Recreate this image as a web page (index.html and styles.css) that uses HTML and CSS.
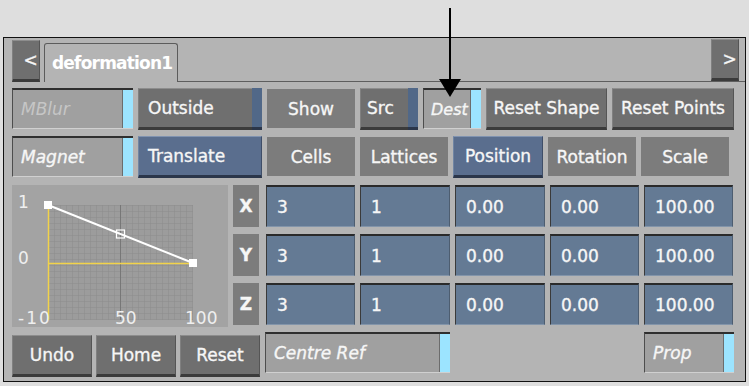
FILE: index.html
```html
<!DOCTYPE html>
<html lang="en">
<head>
  <meta charset="UTF-8" />
  <title>deformation1</title>
  <link rel="stylesheet" href="styles.css">
</head>
<body>
  <!-- callout arrow pointing at Dest -->
  <svg class="arrow" width="24" height="98" viewBox="0 0 24 98">
    <line x1="12" y1="8" x2="12" y2="82" stroke="#000" stroke-width="2"/>
    <polygon points="1,79 23,79 12,97" fill="#000"/>
  </svg>

  <div class="panel">
    <div class="tabbar">
      <div class="btn raised nav">&lt;</div>
      <div class="tab">deformation1</div>
      <div class="tab-fill"><div class="btn raised nav">&gt;</div></div>
    </div>

    <div class="row r1">
      <div class="btn toggle dim w-mode">MBlur</div>
      <div class="btn raised strip w-mode2">Outside</div>
      <div class="btn flat w-col">Show</div>
      <div class="btn raised strip w-src">Src</div>
      <div class="btn toggle w-dest">Dest</div>
      <div class="btn raised center w-reset">Reset Shape</div>
      <div class="btn raised center w-reset2">Reset Points</div>
    </div>

    <div class="row r2">
      <div class="btn toggle w-mode">Magnet</div>
      <div class="btn blue w-mode2">Translate</div>
      <div class="btn flat w-col">Cells</div>
      <div class="btn flat w-col">Lattices</div>
      <div class="btn blue center w-col2">Position</div>
      <div class="btn flat w-col">Rotation</div>
      <div class="btn flat w-col">Scale</div>
    </div>

    <div class="mid">
      <div class="graph">
        <svg width="216" height="142" viewBox="0 0 216 142">
          <defs>
            <pattern id="cells" width="6" height="6" patternUnits="userSpaceOnUse" x="36" y="20">
              <path d="M6 0 L0 0 0 6" fill="none" stroke="#8b8b8b" stroke-width="1"/>
            </pattern>
          </defs>
          <rect x="36" y="20" width="145" height="115" fill="#9c9c9c"/>
          <rect x="36" y="20" width="145" height="115" fill="url(#cells)"/>
          <line x1="108.5" y1="20" x2="108.5" y2="135" stroke="#777"/>
          <line x1="36.5" y1="20" x2="36.5" y2="135" stroke="#f2d34a" stroke-width="1.5"/>
          <line x1="36" y1="78.5" x2="181" y2="78.5" stroke="#f2d34a" stroke-width="1.5"/>
          <line x1="36" y1="20" x2="181" y2="78" stroke="#fff" stroke-width="2"/>
          <rect x="32" y="16" width="8" height="8" fill="#fff"/>
          <rect x="177" y="74" width="8" height="8" fill="#fff"/>
          <rect x="104.5" y="45" width="8" height="8" fill="none" stroke="#fff" stroke-width="1.2"/>
          <text x="6" y="23" class="axis">1</text>
          <text x="6" y="79" class="axis">0</text>
          <text x="6" y="139" class="axis" letter-spacing="2">-10</text>
          <text x="103" y="139" class="axis">50</text>
          <text x="173" y="139" class="axis">100</text>
        </svg>
      </div>
      <div class="values">
        <div class="vrow">
          <div class="btn flat axis-label">X</div>
          <div class="btn field w-f1">3</div>
          <div class="btn field w-f2">1</div>
          <div class="btn field w-f2">0.00</div>
          <div class="btn field w-f1">0.00</div>
          <div class="btn field w-f1">100.00</div>
        </div>
        <div class="vrow">
          <div class="btn flat axis-label">Y</div>
          <div class="btn field w-f1">3</div>
          <div class="btn field w-f2">1</div>
          <div class="btn field w-f2">0.00</div>
          <div class="btn field w-f1">0.00</div>
          <div class="btn field w-f1">100.00</div>
        </div>
        <div class="vrow">
          <div class="btn flat axis-label">Z</div>
          <div class="btn field w-f1">3</div>
          <div class="btn field w-f2">1</div>
          <div class="btn field w-f2">0.00</div>
          <div class="btn field w-f1">0.00</div>
          <div class="btn field w-f1">100.00</div>
        </div>
      </div>
    </div>

    <div class="row bottom">
      <div class="btn raised center w-small">Undo</div>
      <div class="btn raised center w-small">Home</div>
      <div class="btn raised center w-small">Reset</div>
      <div class="btn toggle w-centre">Centre Ref</div>
      <div class="spacer"></div>
      <div class="btn toggle w-prop">Prop</div>
    </div>
  </div>
</body>
</html>
```

FILE: styles.css
```css
body {
  margin: 0;
  background: #dedede;
  font-family: 'DejaVu Sans', sans-serif;
  position: relative;
  height: 386px;
  overflow: hidden;
}
.arrow {
  position: absolute;
  left: 438px;
  top: 0;
  z-index: 5;
}
.panel {
  margin: 37px 0 0 3px;
  width: 722px;
  height: 343px;
  border: 1px solid #111;
  background: #b4b4b4;
  padding: 0 11px 0 8px;
}

/* tab strip */
.tabbar {
  display: flex;
  align-items: flex-end;
  height: 44px;
}
.nav {
  width: 28px;
  height: 36px;
  justify-content: center;
  font-size: 14px;
  color: #c4c4c4;
  padding: 0;
  -webkit-text-stroke: 0;
}
.tab {
  margin-left: 4px;
  height: 38px;
  padding: 0 5px 0 7px;
  border: 1px solid #5c5c5c;
  border-bottom: none;
  border-radius: 3px 3px 0 0;
  display: flex;
  align-items: center;
  color: #fff;
  font-size: 17px;
  font-weight: bold;
  letter-spacing: -0.8px;
}
.tab-fill {
  flex: 1;
  display: flex;
  justify-content: flex-end;
  align-items: flex-end;
  border-bottom: 1px solid #5e5e5e;
  margin-right: -11px;
  padding-right: 6px;
  height: 44px;
  box-sizing: border-box;
}

/* rows */
.row {
  display: flex;
  align-items: flex-start;
}
.r1 { margin-top: 6px; gap: 5px; }
.r2 { margin-top: 6px; gap: 5px; }
.bottom { margin-top: 8px; gap: 4px; }

.btn {
  box-sizing: border-box;
  height: 42px;
  display: flex;
  align-items: center;
  padding-left: 9px;
  font-size: 17px;
  color: #f6f6f6;
  white-space: nowrap;
  position: relative;
  -webkit-text-stroke: 0.35px #f6f6f6;
}
.center { justify-content: center; padding-left: 0; }
.raised {
  background: #6f6f6f;
  border-top: 1px solid #8d8d8d;
  border-left: 1px solid #808080;
  border-right: 1px solid #555;
  border-bottom: 3px solid #3b3b3b;
}
.blue {
  background: #5a6e8e;
  border-top: 1px solid #8093b0;
  border-left: 1px solid #7085a3;
  border-right: 1px solid #3f4e68;
  border-bottom: 3px solid #2b364a;
}
.flat {
  background: #7c7c7c;
  height: 39px;
  margin-top: 1px;
  justify-content: center;
  padding-left: 0;
}
.toggle {
  background: #a0a0a0;
  border-top: 2px solid #2f2f2f;
  border-left: 1px solid #4d4d4d;
  border-bottom: 1px solid #d0d0d0;
  height: 41px;
  font-style: italic;
  padding-left: 8px;
}
.toggle::after {
  content: "";
  position: absolute;
  right: 0;
  top: 0;
  bottom: 0;
  width: 10px;
  background: #9ce4ff;
  border-left: 1px solid #6c6c6c;
}
.toggle.dim { color: #c6c6c6; -webkit-text-stroke: 0; }
.strip::after {
  content: "";
  position: absolute;
  right: -1px;
  top: -1px;
  bottom: -3px;
  width: 10px;
  background: #516888;
  border-bottom: 3px solid #2b364a;
  box-sizing: border-box;
}

.w-mode { width: 121px; }
.w-mode2 { width: 124px; }
.w-col { width: 88px; }
.w-col2 { width: 90px; }
.w-src { width: 58px; padding-left: 6px; }
.w-dest { width: 58px; padding-left: 7px; font-size: 16px; }
.w-reset { width: 121px; }
.w-reset2 { width: 122px; }
.w-small { width: 80px; }
.w-centre { width: 185px; margin-left: 1px; margin-top: -3px; }
.w-prop { width: 90px; margin-top: -3px; }
.spacer { flex: 1; }

/* graph + values */
.mid {
  display: flex;
  margin-top: 7px;
}
.graph {
  width: 216px;
  height: 142px;
  background: #a3a3a3;
}
.graph svg { display: block; }
.axis {
  font-family: 'DejaVu Sans', sans-serif;
  font-size: 17px;
  fill: #efefef;
}
.values {
  display: flex;
  flex-direction: column;
  gap: 7px;
  margin-left: 5px;
}
.vrow {
  display: flex;
  gap: 5px;
}
.axis-label {
  width: 26px;
  height: 42px;
  margin: 0 2px 0 0;
  font-weight: bold;
}
.field {
  background: #647a94;
  border-top: 2px solid #2a2a2a;
  border-left: 1px solid #3a3a3a;
  border-right: 1px solid #4d5d70;
  border-bottom: 1px solid #8395aa;
  padding-left: 10px;
}
.w-f1 { width: 89px; }
.w-f2 { width: 90px; }
```
